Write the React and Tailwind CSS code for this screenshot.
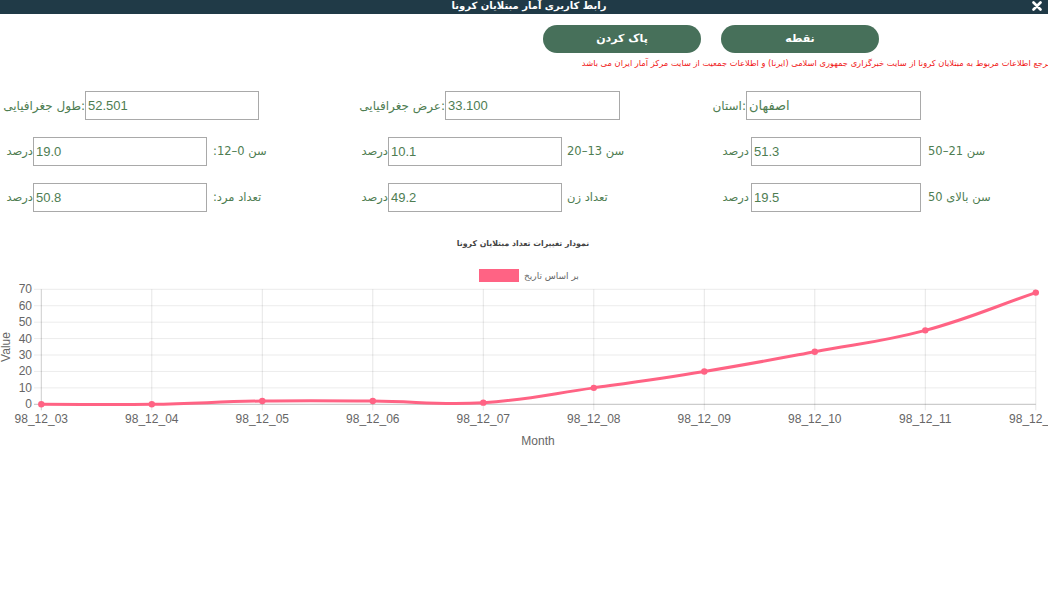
import React from "react";

const FA = { fontFamily: '"DejaVu Sans", "Noto Sans", sans-serif' };
const LAT = { fontFamily: '"Liberation Sans", Arial, sans-serif' };

const labels = ["98_12_03", "98_12_04", "98_12_05", "98_12_06", "98_12_07", "98_12_08", "98_12_09", "98_12_10", "98_12_11", "98_12_12"];
const values = [0, 0, 2, 2, 1, 10, 20, 32, 45, 68];

const X0 = 41.3;
const STEP = 110.5;
const Y0 = 404.3;
const PX = 115 / 70;
const px = (i) => X0 + i * STEP;
const py = (v) => Y0 - v * PX;

const points = values.map((v, i) => ({ x: px(i), y: py(v) }));

// chart.js style spline (tension 0.4)
function splinePath(pts, t = 0.4) {
  const cps = pts.map((p, i) => {
    const prev = pts[i - 1] || p;
    const next = pts[i + 1] || p;
    const d01 = Math.hypot(p.x - prev.x, p.y - prev.y);
    const d12 = Math.hypot(next.x - p.x, next.y - p.y);
    let s01 = d01 / (d01 + d12);
    let s12 = d12 / (d01 + d12);
    if (isNaN(s01)) s01 = 0;
    if (isNaN(s12)) s12 = 0;
    const fa = t * s01;
    const fb = t * s12;
    return {
      prev: { x: p.x - fa * (next.x - prev.x), y: p.y - fa * (next.y - prev.y) },
      next: { x: p.x + fb * (next.x - prev.x), y: p.y + fb * (next.y - prev.y) },
    };
  });
  let d = `M${pts[0].x},${pts[0].y}`;
  for (let i = 1; i < pts.length; i++) {
    const a = cps[i - 1].next;
    const b = cps[i].prev;
    d += ` C${a.x},${a.y} ${b.x},${b.y} ${pts[i].x},${pts[i].y}`;
  }
  return d;
}

function Chart() {
  const ticks = [0, 10, 20, 30, 40, 50, 60, 70];
  return (
    <svg width="1048" height="220" viewBox="0 230 1048 220" className="block mt-[18px]">
      <text x="523" y="246" textAnchor="middle" fontSize="7.8" fontWeight="bold" fill="#444" style={FA}>
        نمودار تغییرات تعداد مبتلایان کرونا
      </text>
      <rect x="479" y="269" width="40" height="13" fill="#ff6384" />
      <text x="524" y="278.5" fontSize="9" fill="#666" style={FA}>
        بر اساس  تاریخ
      </text>

      {ticks.map((t) => (
        <g key={t}>
          <line x1="34" x2="1035.7" y1={py(t)} y2={py(t)} stroke={t === 0 ? "rgba(0,0,0,0.25)" : "rgba(0,0,0,0.08)"} strokeWidth="1" />
          <text x="32" y={py(t) + 4} textAnchor="end" fontSize="12" fill="#666" style={LAT}>
            {t}
          </text>
        </g>
      ))}
      {labels.map((l, i) => (
        <g key={l}>
          <line x1={px(i)} x2={px(i)} y1={py(70)} y2={Y0 + 6} stroke={i === 0 ? "rgba(0,0,0,0.2)" : "rgba(0,0,0,0.1)"} strokeWidth="1" />
          <text x={px(i)} y="422.5" textAnchor="middle" fontSize="12" fill="#666" style={LAT}>
            {l}
          </text>
        </g>
      ))}
      <text x="538" y="445" textAnchor="middle" fontSize="12" fill="#666" style={LAT}>
        Month
      </text>
      <text x="0" y="0" transform="translate(9.5 347) rotate(-90)" textAnchor="middle" fontSize="12" fill="#666" style={LAT}>
        Value
      </text>

      <path d={splinePath(points)} fill="none" stroke="#ff6384" strokeWidth="3" />
      {points.map((p, i) => (
        <circle key={i} cx={p.x} cy={p.y} r="3.2" fill="#ff6384" />
      ))}
    </svg>
  );
}

function Box({ value, w = "w-[174px]", fa }) {
  return (
    <div
      className={`${w} h-[29px] border border-[#a9a9a9] flex items-center pl-[2px] text-[13px] text-[#4e7d52] shrink-0`}
      style={fa ? FA : LAT}
    >
      {value}
    </div>
  );
}

function Label({ w, children, dir = "ltr" }) {
  return (
    <div className={`${w} flex justify-end shrink-0`}>
      <span className="whitespace-nowrap" dir={dir}>
        {children}
      </span>
    </div>
  );
}

export default function App() {
  return (
    <div className="w-[1048px] h-[607px] bg-white overflow-hidden relative">
      {/* title bar */}
      <div className="relative h-[14px] bg-[#203a47] flex justify-center">
        <span className="text-white text-[10px] font-bold leading-[11px] pl-[10px]" style={FA} dir="rtl">
          رابط کاربری آمار مبتلایان کرونا
        </span>
        <svg className="absolute right-[6px] top-[1px]" width="10" height="10" viewBox="0 0 10 10">
          <path d="M1.5 1.5 L8.5 8.5 M8.5 1.5 L1.5 8.5" stroke="white" strokeWidth="2.6" strokeLinecap="round" />
        </svg>
      </div>

      {/* buttons */}
      <div className="flex justify-end gap-[20px] pr-[169px] mt-[11px]">
        <button className="w-[158px] h-[28px] rounded-[14px] bg-[#47705a] text-white text-[11px] font-bold" style={FA}>
          پاک کردن
        </button>
        <button className="w-[158px] h-[28px] rounded-[14px] bg-[#47705a] text-white text-[11px] font-bold" style={FA}>
          نقطه
        </button>
      </div>

      {/* source note */}
      <div className="flex justify-end mt-[4px] mr-[-4px]">
        <p className="text-[8.3px] leading-[13px] text-[#f01818] whitespace-nowrap" style={FA} dir="rtl">
          مرجع اطلاعات مربوط به مبتلایان کرونا از سایت خبرگزاری جمهوری اسلامی (ایرنا) و اطلاعات جمعیت از سایت مرکز آمار ایران می باشد
        </p>
      </div>

      {/* form */}
      <div className="mt-[21px] pl-[5px] flex flex-col gap-[17px] text-[12px] text-[#4e7d52]" style={FA}>
        <div className="flex">
          <div className="w-[356px] flex items-center">
            <Label w="w-[80px]">طول جغرافیایی:</Label>
            <Box value="52.501" />
          </div>
          <div className="w-[339px] flex items-center">
            <Label w="w-[84px]">عرض جغرافیایی:</Label>
            <Box value="33.100" w="w-[175px]" />
          </div>
          <div className="flex items-center">
            <Label w="w-[46px]">استان:</Label>
            <Box value="اصفهان" w="w-[175px]" fa />
          </div>
        </div>

        <div className="flex text-[11.5px]">
          <div className="w-[356px] flex items-center">
            <Label w="w-[28px]" dir="rtl">درصد</Label>
            <Box value="19.0" />
            <span className="ml-[6px] whitespace-nowrap" dir="rtl">سن 0–12:</span>
          </div>
          <div className="w-[355px] flex items-center">
            <Label w="w-[27px]" dir="rtl">درصد</Label>
            <Box value="10.1" />
            <span className="ml-[5px] whitespace-nowrap" dir="rtl">سن 13–20</span>
          </div>
          <div className="flex items-center">
            <Label w="w-[33px] mr-[2px]" dir="rtl">درصد</Label>
            <Box value="51.3" w="w-[170px]" />
            <span className="ml-[7px] whitespace-nowrap" dir="rtl">سن 21–50</span>
          </div>
        </div>

        <div className="flex text-[11.5px]">
          <div className="w-[356px] flex items-center">
            <Label w="w-[28px]" dir="rtl">درصد</Label>
            <Box value="50.8" />
            <span className="ml-[6px] whitespace-nowrap" dir="rtl">تعداد مرد:</span>
          </div>
          <div className="w-[355px] flex items-center">
            <Label w="w-[27px]" dir="rtl">درصد</Label>
            <Box value="49.2" />
            <span className="ml-[5px] whitespace-nowrap" dir="rtl">تعداد زن</span>
          </div>
          <div className="flex items-center">
            <Label w="w-[33px] mr-[2px]" dir="rtl">درصد</Label>
            <Box value="19.5" w="w-[170px]" />
            <span className="ml-[7px] whitespace-nowrap" dir="rtl">سن بالای 50</span>
          </div>
        </div>
      </div>

      <Chart />
    </div>
  );
}
